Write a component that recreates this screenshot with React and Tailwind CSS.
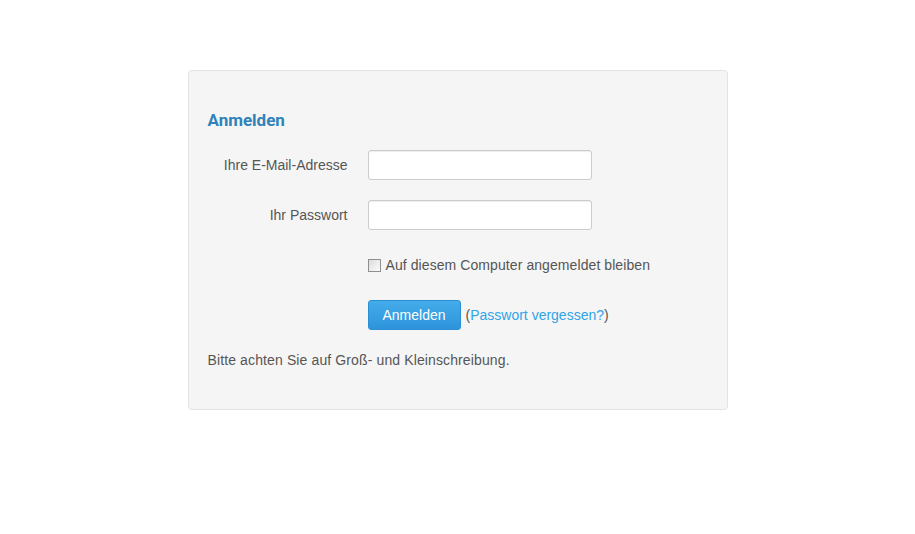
export default function App() {
    return (
        <div className="min-h-[534px] bg-white pt-[70px] font-['Liberation_Sans',Arial,sans-serif] text-[14px] text-[#555]">
            <div className="mx-auto w-[540px] rounded-[4px] border border-[#e3e3e3] bg-[#f5f5f5] px-[19px] pt-[39px] pb-[39px]">
                <h2 className="mb-[20px] font-['Roboto',sans-serif] text-[17px] leading-[20px] font-bold text-[#2f82ba]">
                    Anmelden
                </h2>

                <div className="flex items-center">
                    <label className="w-[140px] text-right leading-[20px]">Ihre E-Mail-Adresse</label>
                    <input
                        type="text"
                        className="ml-[20px] h-[30px] w-[224px] rounded-[3px] border border-[#ccc] bg-white px-[6px] shadow-[inset_0_1px_1px_rgba(0,0,0,0.075)] outline-none"
                    />
                </div>

                <div className="mt-[20px] flex items-center">
                    <label className="w-[140px] text-right leading-[20px]">Ihr Passwort</label>
                    <input
                        type="password"
                        className="ml-[20px] h-[30px] w-[224px] rounded-[3px] border border-[#ccc] bg-white px-[6px] shadow-[inset_0_1px_1px_rgba(0,0,0,0.075)] outline-none"
                    />
                </div>

                <div className="mt-[25px] ml-[160px] flex h-[20px] items-center">
                    <span className="h-[13px] w-[13px] border border-[#8f8f8f] bg-gradient-to-br from-[#dcdcdc] to-[#fbfbfb]" />
                    <span className="ml-[5px] leading-[20px] tracking-[0.08px]">Auf diesem Computer angemeldet bleiben</span>
                </div>

                <div className="mt-[25px] ml-[160px] flex items-center">
                    <button className="h-[30px] w-[93px] rounded-[3px] border border-[#2b8dd3] bg-gradient-to-b from-[#44ace9] to-[#2d94dc] text-[14px] text-white">
                        Anmelden
                    </button>
                    <span className="ml-[5px] leading-[20px]">
                        (<a className="text-[#2fa4e7]">Passwort vergessen?</a>)
                    </span>
                </div>

                <p className="mt-[20px] leading-[20px] tracking-[0.12px]">Bitte achten Sie auf Groß- und Kleinschreibung.</p>
            </div>
        </div>
    );
}
